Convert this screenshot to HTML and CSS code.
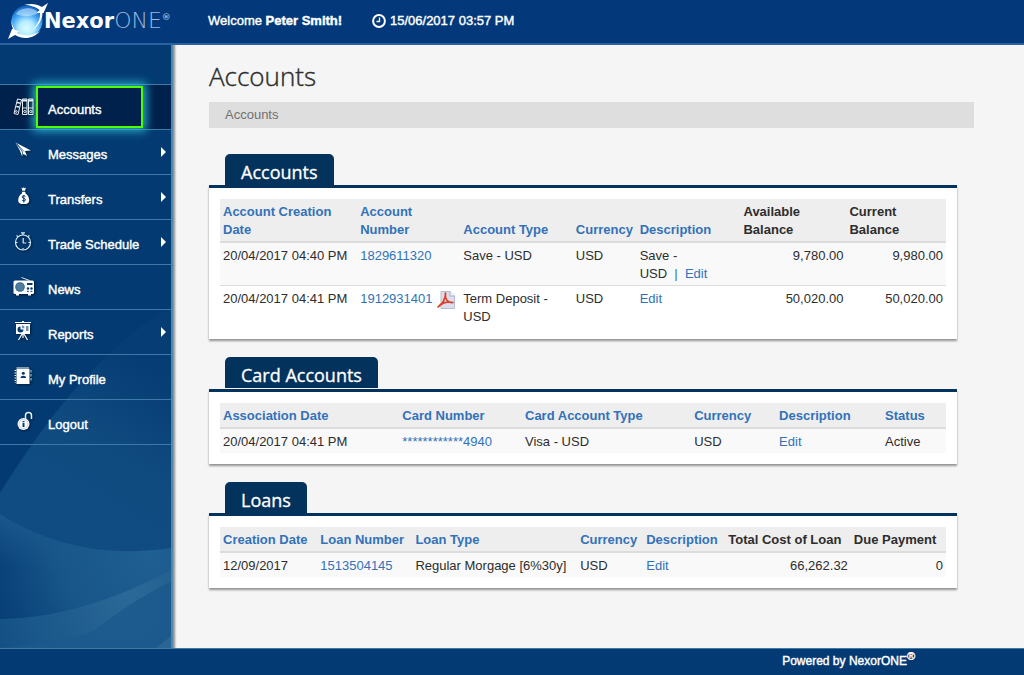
FILE: index.html
```html
<!DOCTYPE html>
<html lang="en">
<head>
<meta charset="utf-8">
<meta name="viewport" content="width=device-width, initial-scale=1">
<title>NexorONE - Accounts</title>
<link rel="stylesheet" href="styles.css">
</head>
<body>
<header class="topbar">
  <a class="logo" href="#">
    <svg class="logo-globe" width="42" height="36" viewBox="0 0 42 36" aria-hidden="true">
      <defs>
        <radialGradient id="globe" cx="48%" cy="74%" r="70%">
          <stop offset="0" stop-color="#dcfaff"/><stop offset=".35" stop-color="#b4ecff"/><stop offset=".7" stop-color="#3ea2f2"/><stop offset="1" stop-color="#1468c8"/>
        </radialGradient>
      </defs>
      <circle cx="20" cy="18" r="15.500" fill="url(#globe)"/>
      <path d="M9 11c3-7 19-8 22-1-6 4-16 4-22 1z" fill="#e6f6ff" opacity=".5"/>
      <path d="M17 2c7-2 13-1 18 2l6-4-4.500 10-1 0c0 7-5 14-11 18 7-7 9-13 8.500-18l-3.500 0 3-3C29 4 23 2 17 2z" fill="#fff"/>
      <path d="M6 14C4 19 5 23 8 27l4 1-2 2c7 4 16 3 23-2-6 8-17 9-25 4l-7 4 4-10 1 0C4 22 4 18 6 14z" fill="#fff"/>
    </svg>
    <span class="logo-name">Nexor<span class="logo-one">ONE</span><sup class="logo-reg">®</sup></span>
  </a>
  <div class="welcome">Welcome <b>Peter Smith!</b></div>
  <div class="clock">
    <svg width="14" height="14" viewBox="0 0 14 14" fill="none" stroke="#fff" aria-hidden="true"><circle cx="7" cy="7" r="5.900" stroke-width="2"/><path d="M7.500 3.500v4H4.500" stroke-width="1.300"/></svg>
    <time datetime="2017-06-15T15:57">15/06/2017 03:57 PM</time>
  </div>
</header>

<div class="body">
  <aside class="sidebar">
    <svg class="waves" viewBox="0 0 171 360" preserveAspectRatio="none" aria-hidden="true">
      <defs>
        <linearGradient id="w1" x1="0" y1="1" x2=".3" y2="0"><stop offset="0" stop-color="#0f4d83"/><stop offset=".7" stop-color="#104b80"/><stop offset="1" stop-color="#063d74"/></linearGradient>
        <radialGradient id="w2" gradientUnits="userSpaceOnUse" cx="150" cy="265" r="175"><stop offset="0" stop-color="#1f5f92"/><stop offset=".5" stop-color="#185689"/><stop offset="1" stop-color="#043a73"/></radialGradient>
        <linearGradient id="w2b" gradientUnits="userSpaceOnUse" x1="10" y1="226" x2="0" y2="275"><stop offset="0" stop-color="#1b588c"/><stop offset="1" stop-color="#1b588c" stop-opacity="0"/></linearGradient>
        <radialGradient id="w3" gradientUnits="userSpaceOnUse" cx="130" cy="305" r="150"><stop offset="0" stop-color="#2b6998"/><stop offset="1" stop-color="#124e83"/></radialGradient>
        <linearGradient id="w4" x1="0" y1="1" x2="1" y2="0"><stop offset="0" stop-color="#1b5a8d"/><stop offset="1" stop-color="#1a588c"/></linearGradient>
      </defs>
      <path d="M0 205Q86 66 171 20V360H0z" fill="url(#w1)"/>
      <path d="M0 226Q72 274 171 260V360H0z" fill="url(#w2)"/>
      <path d="M0 226Q40 252 90 260L60 300L0 290z" fill="url(#w2b)"/>
      <path d="M0 331Q82 330 171 282V360H0z" fill="url(#w3)"/>
      <path d="M171 293Q130 314 95 342Q80 352 0 360H171z" fill="url(#w4)" opacity=".8"/>
      <path d="M171 348L156 360H171z" fill="#2a6695"/>
    </svg>
    <nav class="nav">
      <a class="nav-item is-active" href="#">
        <svg class="nav-icon" viewBox="0 0 22 22" fill="none" stroke="#e6eef5" stroke-width="1"><path d="M4.500 3l4 .8L5 18.500l-4-1z"/><path d="M4 6.500l3.500.8M3.300 10.500l3 .6" stroke-width="1.500"/><circle cx="3.300" cy="15.500" r=".9"/><path d="M9.500 3H14v15.500H9.500zM15.500 3H20v15.500h-4.500z"/><path d="M9.500 4.500H14M15.500 4.500H20" stroke-width="2"/><path d="M9.500 12H14M15.500 12H20"/><circle cx="11.800" cy="15.500" r="1.100"/><circle cx="17.800" cy="15.500" r="1.100"/></svg>
        <span class="nav-label">Accounts</span>
      </a>
      <a class="nav-item" href="#">
        <svg class="nav-icon" viewBox="0 0 22 22"><path d="M2.500 1.500L18 9.500l-6 .5 2 5-3.500-2-1.500 2-2-5z" fill="#fff"/><path d="M3.500 2.500l6 8.500v3M3.500 2.500l7.500 8" fill="none" stroke="#033a71" stroke-width=".7"/></svg>
        <span class="nav-label">Messages</span><span class="nav-arrow"></span>
      </a>
      <a class="nav-item" href="#">
        <svg class="nav-icon" viewBox="0 0 22 22"><path d="M8.500 1.500l1.300.8.900-1 .9 1 1.300-.8-.8 3.200h-2.800zM9 5.800h3.400v1.500c3 2 4.300 5.500 3.600 8.200-.5 2-2 2.500-5.300 2.500s-4.800-.5-5.300-2.500C4.700 12.800 6 9.300 9 7.300z" fill="#fff"/><path d="M12.500 10.500c-.8-1.200-3.500-1-3.400.5 0 1.700 3.400 1 3.400 2.800 0 1.500-2.800 1.500-3.500.2M10.800 9v7.500" fill="none" stroke="#033a71"/></svg>
        <span class="nav-label">Transfers</span><span class="nav-arrow"></span>
      </a>
      <a class="nav-item" href="#">
        <svg class="nav-icon" viewBox="0 0 22 22" fill="none" stroke="#d8ecf8" stroke-width="1.200"><circle cx="10" cy="11.500" r="7.500"/><path d="M10.200 7v5h3M10 4V2.500M8 1.800h4M3.500 4.500l1.500 1M16.500 4.500l-1.500 1M10 17v1.500M3 11.500h1.500M15.500 11.500H17"/></svg>
        <span class="nav-label">Trade Schedule</span><span class="nav-arrow"></span>
      </a>
      <a class="nav-item" href="#">
        <svg class="nav-icon" viewBox="0 0 22 22"><path d="M8.500 1.500l8 3" stroke="#d8ecf8" fill="none"/><rect x=".5" y="4.500" width="20.500" height="13.500" rx="1.500" fill="#fff"/><path d="M3 18h3v1.500H3zM15 18h3v1.500h-3z" fill="#fff"/><circle cx="7" cy="11" r="4.800" fill="#2f6288"/><path d="M3 9h8M3 11h8M3 13h8M5 7v8M7 7v8M9 7v8" stroke="#7297b2" stroke-width=".6"/><path d="M14 7h5.500v2H14z" fill="#033a71"/><circle cx="15" cy="12.500" r="1.200" fill="#033a71"/><circle cx="18.500" cy="12.500" r="1.200" fill="#033a71"/><path d="M14 15.300h1.800M17.500 15.300h1.800" stroke="#033a71"/></svg>
        <span class="nav-label">News</span>
      </a>
      <a class="nav-item" href="#">
        <svg class="nav-icon" viewBox="0 0 22 22"><path d="M2 1.500h16M9 .3h2" stroke="#fff" stroke-width="1.200"/><path d="M3 3h14v10H3z" fill="#fff"/><path d="M9 13l-3.500 6M11 13l3.500 6M10 13v4" stroke="#fff" stroke-width="1.200"/><path d="M7.500 5.500v3h3a3 3 0 1 1-3-3z" fill="#033a71"/><path d="M9 4.300a3 3 0 0 1 2.700 2.900H9zM13 5h2.500v5H13z" fill="#6d93b0"/></svg>
        <span class="nav-label">Reports</span><span class="nav-arrow"></span>
      </a>
      <a class="nav-item" href="#">
        <svg class="nav-icon" viewBox="0 0 22 22"><path d="M3.500 3h13v15h-13zM3.500 1.500h12.500v1h-12.500z" fill="#fff"/><path d="M2.300 4v13" stroke="#fff" stroke-width="1.500" stroke-dasharray="1 1.500"/><path d="M17.500 4h1v2.500h-1zM17.500 8h1v2.500h-1zM17.500 12h1v2.500h-1z" fill="#b8d2e5"/><circle cx="10.300" cy="7.300" r="1.500" fill="#033a71"/><path d="M7.500 12c0-3 5.600-3 5.600 0z" fill="#033a71"/></svg>
        <span class="nav-label">My Profile</span>
      </a>
      <a class="nav-item" href="#">
        <svg class="nav-icon" viewBox="0 0 22 22"><path d="M12.500 8V4.500a3 3 0 0 1 6 0V8" fill="none" stroke="#e3f2fb" stroke-width="1.500"/><circle cx="10.500" cy="13" r="6" fill="#fff"/><circle cx="10.500" cy="13" r="4.500" fill="none" stroke="#9fbdd2" stroke-width=".7"/><path d="M9.500 10h2v1.200h-2zM9.500 12h2v4h-2z" fill="#033a71"/></svg>
        <span class="nav-label">Logout</span>
      </a>
    </nav>
  </aside>

  <main class="content">
    <h1 class="title">Accounts</h1>
    <div class="crumb">Accounts</div>

    <section class="panel">
      <h2 class="panel-tab">Accounts</h2>
      <div class="panel-box">
        <table class="grid">
          <colgroup><col class="a-date"><col class="a-number"><col class="a-type"><col class="a-currency"><col class="a-desc"><col class="a-avail"><col class="a-current"></colgroup>
          <thead><tr>
            <th><a href="#">Account Creation<br>Date</a></th><th><a href="#">Account<br>Number</a></th><th><a href="#">Account Type</a></th><th><a href="#">Currency</a></th><th><a href="#">Description</a></th><th>Available<br>Balance</th><th>Current<br>Balance</th>
          </tr></thead>
          <tbody>
            <tr><td>20/04/2017 04:40 PM</td><td><a href="#">1829611320</a></td><td>Save - USD</td><td>USD</td><td>Save -<br>USD &nbsp;<a href="#">|&nbsp; Edit</a></td><td class="num">9,780.00</td><td class="num">9,980.00</td></tr>
            <tr><td>20/04/2017 04:41 PM</td><td><span class="with-pdf"><a href="#">1912931401</a><a href="#" aria-label="Download PDF"><svg class="pdf" width="18" height="18" viewBox="0 0 18 18"><path d="M4 .5h9l4.500 4.500v12.500H4z" fill="#dcdfeb" stroke="#b9bccf"/><path d="M13 .5V5h4.500" fill="#f7f8fc" stroke="#a9adc4"/><path d="M1 16c4-2 8-9 7.500-14C7.500 8 11 12 16 11.500 11 10 4 12 1 16z" fill="none" stroke="#d8402a" stroke-width="1.700" stroke-linejoin="round"/></svg></a></span></td><td>Term Deposit -<br>USD</td><td>USD</td><td><a href="#">Edit</a></td><td class="num">50,020.00</td><td class="num">50,020.00</td></tr>
          </tbody>
        </table>
      </div>
    </section>

    <section class="panel">
      <h2 class="panel-tab panel-tab-raised">Card Accounts</h2>
      <div class="panel-box">
        <table class="grid">
          <colgroup><col class="c-date"><col class="c-number"><col class="c-type"><col class="c-currency"><col class="c-desc"><col class="c-status"></colgroup>
          <thead><tr>
            <th><a href="#">Association Date</a></th><th><a href="#">Card Number</a></th><th><a href="#">Card Account Type</a></th><th><a href="#">Currency</a></th><th><a href="#">Description</a></th><th><a href="#">Status</a></th>
          </tr></thead>
          <tbody>
            <tr><td>20/04/2017 04:41 PM</td><td><a href="#">************4940</a></td><td>Visa - USD</td><td>USD</td><td><a href="#">Edit</a></td><td>Active</td></tr>
          </tbody>
        </table>
      </div>
    </section>

    <section class="panel">
      <h2 class="panel-tab">Loans</h2>
      <div class="panel-box">
        <table class="grid">
          <colgroup><col class="l-date"><col class="l-number"><col class="l-type"><col class="l-currency"><col class="l-desc"><col class="l-total"><col class="l-due"></colgroup>
          <thead><tr>
            <th><a href="#">Creation Date</a></th><th><a href="#">Loan Number</a></th><th><a href="#">Loan Type</a></th><th><a href="#">Currency</a></th><th><a href="#">Description</a></th><th>Total Cost of Loan</th><th>Due Payment</th>
          </tr></thead>
          <tbody>
            <tr><td>12/09/2017</td><td><a href="#">1513504145</a></td><td>Regular Morgage [6%30y]</td><td>USD</td><td><a href="#">Edit</a></td><td class="num">66,262.32</td><td class="num">0</td></tr>
          </tbody>
        </table>
      </div>
    </section>
  </main>
</div>

<footer class="footer">Powered by NexorONE<sup>®</sup></footer>
</body>
</html>
```
FILE: styles.css
```css
* { box-sizing: border-box; }

body {
  display: flex;
  flex-direction: column;
  min-height: 100vh;
  margin: 0;
  background: #f5f5f5;
  color: #2d2d2d;
  font: 13px/18px "Liberation Sans", Arial, sans-serif;
}

a { color: #3272b9; text-decoration: none; }

/* Top bar */
.topbar {
  position: relative;
  z-index: 1;
  display: flex;
  align-items: center;
  height: 45px;
  padding: 0 7px 2px;
  border-bottom: 2px solid #2a629f;
  background: #03397a;
  color: #fff;
  -webkit-text-stroke: 0.4px #fff;
}
.logo {
  display: flex;
  align-items: center;
  width: 201px;
  color: #fff;
  -webkit-text-stroke: 0;
}
.logo-globe { flex: none; }
.logo-name {
  margin-left: -5px;
  font: bold 21px/24px "DejaVu Sans", sans-serif;
  white-space: nowrap;
}
.logo-one {
  color: #9db9de;
  font-family: "DejaVu Sans Light", "DejaVu Sans", sans-serif;
  font-size: 22px;
  font-weight: 200;
}
.logo-reg {
  color: #9db9de;
  font-size: 9px;
  line-height: 0;
  vertical-align: 8px;
}
.welcome { width: 164px; }
.clock { display: flex; align-items: center; gap: 4px; }

/* Sidebar */
.body { display: flex; flex: 1; }
.sidebar {
  position: relative;
  flex: none;
  width: 173px;
  padding-top: 39px;
  border-right: 2px solid #5288ad;
  background: #033a71;
  box-shadow: 1px 0 2px 1px #8d8d8d;
}
.waves {
  position: absolute;
  bottom: 0;
  left: 0;
  width: 100%;
  height: 360px;
}
.nav {
  position: relative;
  border-bottom: 1px solid #3c7ba8;
}
.nav-item {
  display: flex;
  align-items: center;
  height: 45px;
  padding: 0 5px 0 13px;
  border-top: 1px solid #3c7ba8;
  color: #fff;
  -webkit-text-stroke: 0.4px #fff;
}
.nav-icon {
  flex: none;
  width: 22px;
  height: 22px;
  filter: drop-shadow(1px 1px 1px rgba(0, 0, 0, 0.5));
}
.nav-label { margin-left: 13px; padding-top: 5px; }
.nav-arrow {
  margin-left: auto;
  border: solid transparent;
  border-width: 5px 0 5px 5px;
  border-left-color: #fff;
}
.is-active { background: #00214c; }
.is-active .nav-label {
  width: 107px;
  margin-left: 1px;
  padding: 13px 10px 7px;
  border: 2px solid #4dff00;
  background: #00214c;
  box-shadow: 0 0 9px 3px #2cb3cd;
}

/* Content */
.content {
  flex: 1;
  min-width: 0;
  padding: 13px 50px 24px 36px;
}
.title {
  margin: 0;
  font: 300 26px/36px "Open Sans", sans-serif;
  -webkit-text-stroke: 0.4px #2d2d2d;
}
.crumb {
  margin: 8px 0 26px;
  padding: 4px 16px;
  background: #dedede;
  color: #707070;
}
.panel { margin: 0 17px 18px 0; }
.panel-tab {
  width: fit-content;
  height: 31px;
  margin: 0 16px;
  padding: 3px 16px 0;
  border-radius: 5px 5px 0 0;
  background: #03335c;
  color: #fff;
  font: 400 18px/31px "Open Sans", sans-serif;
  -webkit-text-stroke: 0.3px #fff;
}
.panel-tab-raised { margin-bottom: 1px; }
.panel-box {
  padding: 11px;
  border-top: 3px solid #03335c;
  background: #fff;
  box-shadow: 0 2px 2px rgba(0, 0, 0, 0.4);
}

.grid {
  width: 100%;
  border-collapse: separate;
  border-spacing: 0;
  table-layout: fixed;
}
.grid th,
.grid td {
  padding: 4px 3px 2px;
  text-align: left;
  vertical-align: top;
  white-space: nowrap;
}
.grid th {
  border-bottom: 2px solid #dcdcdc;
  background: #eee;
  vertical-align: bottom;
}
.grid tr:nth-child(odd) td { background: #f9f9f9; }
.grid tr + tr td { border-top: 1px solid #ddd; }
.grid .num { text-align: right; }
.with-pdf { display: flex; gap: 4px; height: 18px; }
.pdf { display: block; margin-top: 1px; }

.a-date { width: 18.9%; }
.a-number { width: 14.2%; }
.a-type { width: 15.5%; }
.a-currency { width: 8.8%; }
.a-desc { width: 14.3%; }
.a-avail { width: 14.6%; }
.a-current { width: 13.7%; }

.c-date { width: 24.7%; }
.c-number { width: 16.9%; }
.c-type { width: 23.3%; }
.c-currency { width: 11.7%; }
.c-desc { width: 14.6%; }
.c-status { width: 8.8%; }

.l-date { width: 13.4%; }
.l-number { width: 13.1%; }
.l-type { width: 22.7%; }
.l-currency { width: 9.1%; }
.l-desc { width: 11.3%; }
.l-total { width: 17.3%; }
.l-due { width: 13.1%; }

/* Footer */
.footer {
  position: relative;
  height: 27px;
  padding: 3px 109px 0 0;
  border-top: 1px solid #3c7ba8;
  background: #033a74;
  color: #fff;
  font-size: 12px;
  text-align: right;
  -webkit-text-stroke: 0.4px #fff;
}
.footer sup { font-size: 11px; line-height: 0; }
```
